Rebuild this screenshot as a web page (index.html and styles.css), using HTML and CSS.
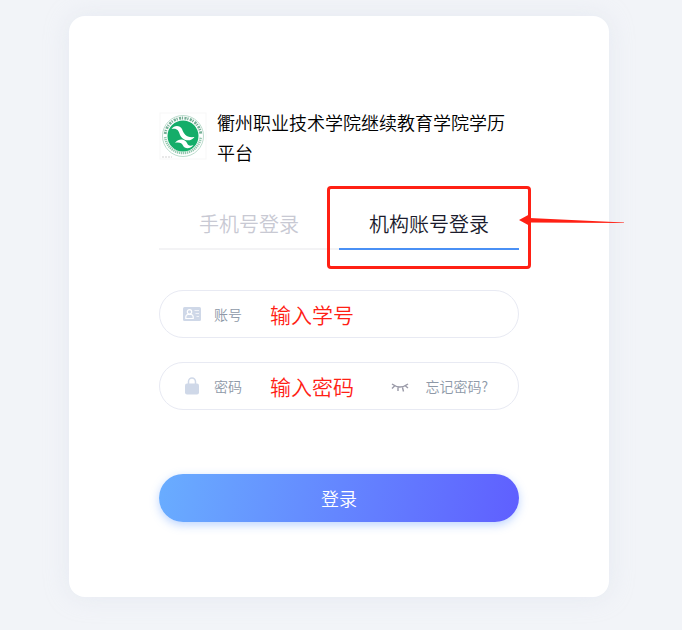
FILE: index.html
```html
<!DOCTYPE html>
<html lang="zh-CN">
<head>
    <meta charset="UTF-8">
    <meta name="viewport" content="width=device-width, initial-scale=1.0">
    <title>登录</title>
    <link rel="stylesheet" href="styles.css">
</head>
<body>
    <main class="card">
        <header class="header">
            <svg class="logo" viewBox="0 0 48 48" aria-hidden="true">
                <rect x="1" y="1" width="46" height="46" fill="#fff" stroke="#f7f7f7"/>
                <circle cx="24" cy="24" r="20.5" fill="#fff" stroke="#bcdccd" stroke-width="1"/>
                <!-- ring of lettering -->
                <path d="M6.200 22A17.900 17.900 0 0 1 41.800 22" fill="none" stroke="#75af96" stroke-width="2.800" stroke-dasharray="2.200 .8 1.200 1.300"/>
                <path d="M6.200 25A17.900 17.900 0 0 0 41.800 25" fill="none" stroke="#93c7ae" stroke-width="2.600" stroke-dasharray="1.300 .7"/>
                <circle cx="24" cy="24" r="15.500" fill="#14ad69"/>
                <path d="M12.500 17C15 13 21 13 23 17C25 22 27 26 35.500 25C31 31 23 28 21 23C19.500 18 18 16 12.500 17Z" fill="#fff"/>
                <path d="M16 31C20 26 26 27 28 31C29 33.500 31 34.500 34.500 33C31 37.500 25.500 37 24 33.500C23 31 20 30 16 31Z" fill="#fff"/>
                <path d="M3 45H13" stroke="#e2e2e2" stroke-width="1.500" stroke-dasharray="2 1"/>
            </svg>
            <h1 class="title">衢州职业技术学院继续教育学院学历平台</h1>
        </header>

        <div class="tabs">
            <button type="button" class="tab">手机号登录</button>
            <div class="tab-wrap">
                <button type="button" class="tab active">机构账号登录</button>
                <span class="mark-box"></span>
                <svg class="mark-arrow" viewBox="0 0 106 14" aria-hidden="true">
                    <path d="M0 7L11 1L10.500 5L105 9.500V10L10.500 9.500L11 13Z" fill="#ff2014"/>
                </svg>
            </div>
        </div>

        <form class="form">
            <div class="field">
                <label for="account">
                    <svg class="icon" viewBox="0 0 18 18" aria-hidden="true">
                        <rect x="0" y="2" width="18" height="14" rx="1.500" fill="#cfd8e8"/>
                        <circle cx="6.500" cy="6.800" r="2.200" fill="none" stroke="#fff" stroke-width="1.200"/>
                        <path d="M2.800 13.500V12Q2.800 9.800 5 9.500H8Q10.200 9.800 10.200 12V13.500Z" fill="none" stroke="#fff" stroke-width="1.200"/>
                        <path d="M11.500 5.500H16M12.500 8.500H16M13.500 11.500H16" stroke="#fff" stroke-opacity=".7" stroke-width="1"/>
                    </svg>
                </label>
                <input type="text" id="account" class="input" placeholder="账号" aria-label="账号">
                <span class="mark-text">输入学号</span>
            </div>
            <div class="field">
                <label for="password">
                    <svg class="icon" viewBox="0 0 18 18" aria-hidden="true">
                        <rect x="2" y="6.500" width="14" height="11" rx="2" fill="#cfd8e8"/>
                        <path d="M5.500 8V4.500A3.500 3.500 0 0 1 12.500 4.500V8" fill="none" stroke="#cfd8e8" stroke-width="1.500"/>
                    </svg>
                </label>
                <input type="password" id="password" class="input" placeholder="密码" aria-label="密码">
                <button type="button" class="eye" aria-label="显示密码">
                    <svg class="eye-icon" viewBox="0 0 18 18" aria-hidden="true">
                        <path d="M1 7Q9 13 17 7M3.500 9L1 11.500M7 10.500V14M11.500 10.500L12.500 14.500M14.500 9L17 11" fill="none" stroke="#9a9aa8" stroke-width="1.400"/>
                    </svg>
                </button>
                <a href="#" class="forgot">忘记密码?</a>
                <span class="mark-text">输入密码</span>
            </div>
            <button type="submit" class="submit">登录</button>
        </form>
    </main>
</body>
</html>
```

FILE: styles.css
```css
* {
    box-sizing: border-box;
}
body {
    margin: 0;
    padding: 16px 4px 32px 0;
    background-color: #f2f4f8;
    font-family: "Noto Sans CJK SC", sans-serif;
    font-weight: 350;
}
button, input {
    font-family: inherit;
    font-weight: inherit;
    border: none;
    background: none;
    padding: 0;
}
.card {
    max-width: 540px;
    margin: 0 auto;
    padding: 91px 90px 75px;
    background-color: #fff;
    border-radius: 16px;
    box-shadow: 0 0 24px rgba(205, 215, 228, 0.35);
}
.header {
    display: flex;
    align-items: flex-start;
    gap: 10px;
}
.logo {
    flex: none;
    width: 48px;
    height: 48px;
    margin-top: 5px;
}
.title {
    margin: 0;
    font-size: 18px;
    line-height: 30px;
    font-weight: 350;
    color: #000;
}
.tabs {
    display: grid;
    grid-template-columns: 1fr 1fr;
    margin-top: 31px;
}
.tab-wrap {
    position: relative;
}
.tab {
    width: 100%;
    height: 52px;
    border-bottom: 2px solid #f3f3f5;
    font-size: 20px;
    color: #c8c9d3;
    cursor: pointer;
}
.tab.active {
    color: #1b1b2c;
    border-bottom-color: #4a90f5;
}
.mark-box {
    position: absolute;
    inset: -12px -12px -19px;
    border: 3px solid #ff2014;
    border-radius: 4px;
    pointer-events: none;
}
.mark-arrow {
    position: absolute;
    top: 15px;
    left: 100%;
    width: 106px;
    height: 14px;
}
.form {
    display: flex;
    flex-direction: column;
    gap: 24px;
    margin-top: 40px;
}
.field {
    position: relative;
    display: flex;
    align-items: center;
    height: 48px;
    padding: 0 30px 0 23px;
    border: 1px solid #e8eaf3;
    border-radius: 24px;
}
.icon, .eye-icon {
    display: block;
    width: 18px;
    height: 18px;
}
.input {
    flex: 1;
    min-width: 0;
    height: 40px;
    margin-left: 13px;
    font-size: 14px;
    outline: none;
}
.input::placeholder {
    color: #8e99a8;
}
.eye {
    margin-right: 16px;
    cursor: pointer;
}
.forgot {
    font-size: 14px;
    color: #8e99a8;
    text-decoration: none;
}
.mark-text {
    position: absolute;
    left: 110px;
    font-size: 21px;
    line-height: 48px;
    color: #ff2014;
    pointer-events: none;
}
.submit {
    height: 48px;
    margin-top: 40px;
    border-radius: 24px;
    background: linear-gradient(100deg, #69adff, #5f5fff);
    box-shadow: 0 3px 10px rgba(90, 150, 255, 0.4);
    font-size: 18px;
    color: #fff;
    cursor: pointer;
}
```
